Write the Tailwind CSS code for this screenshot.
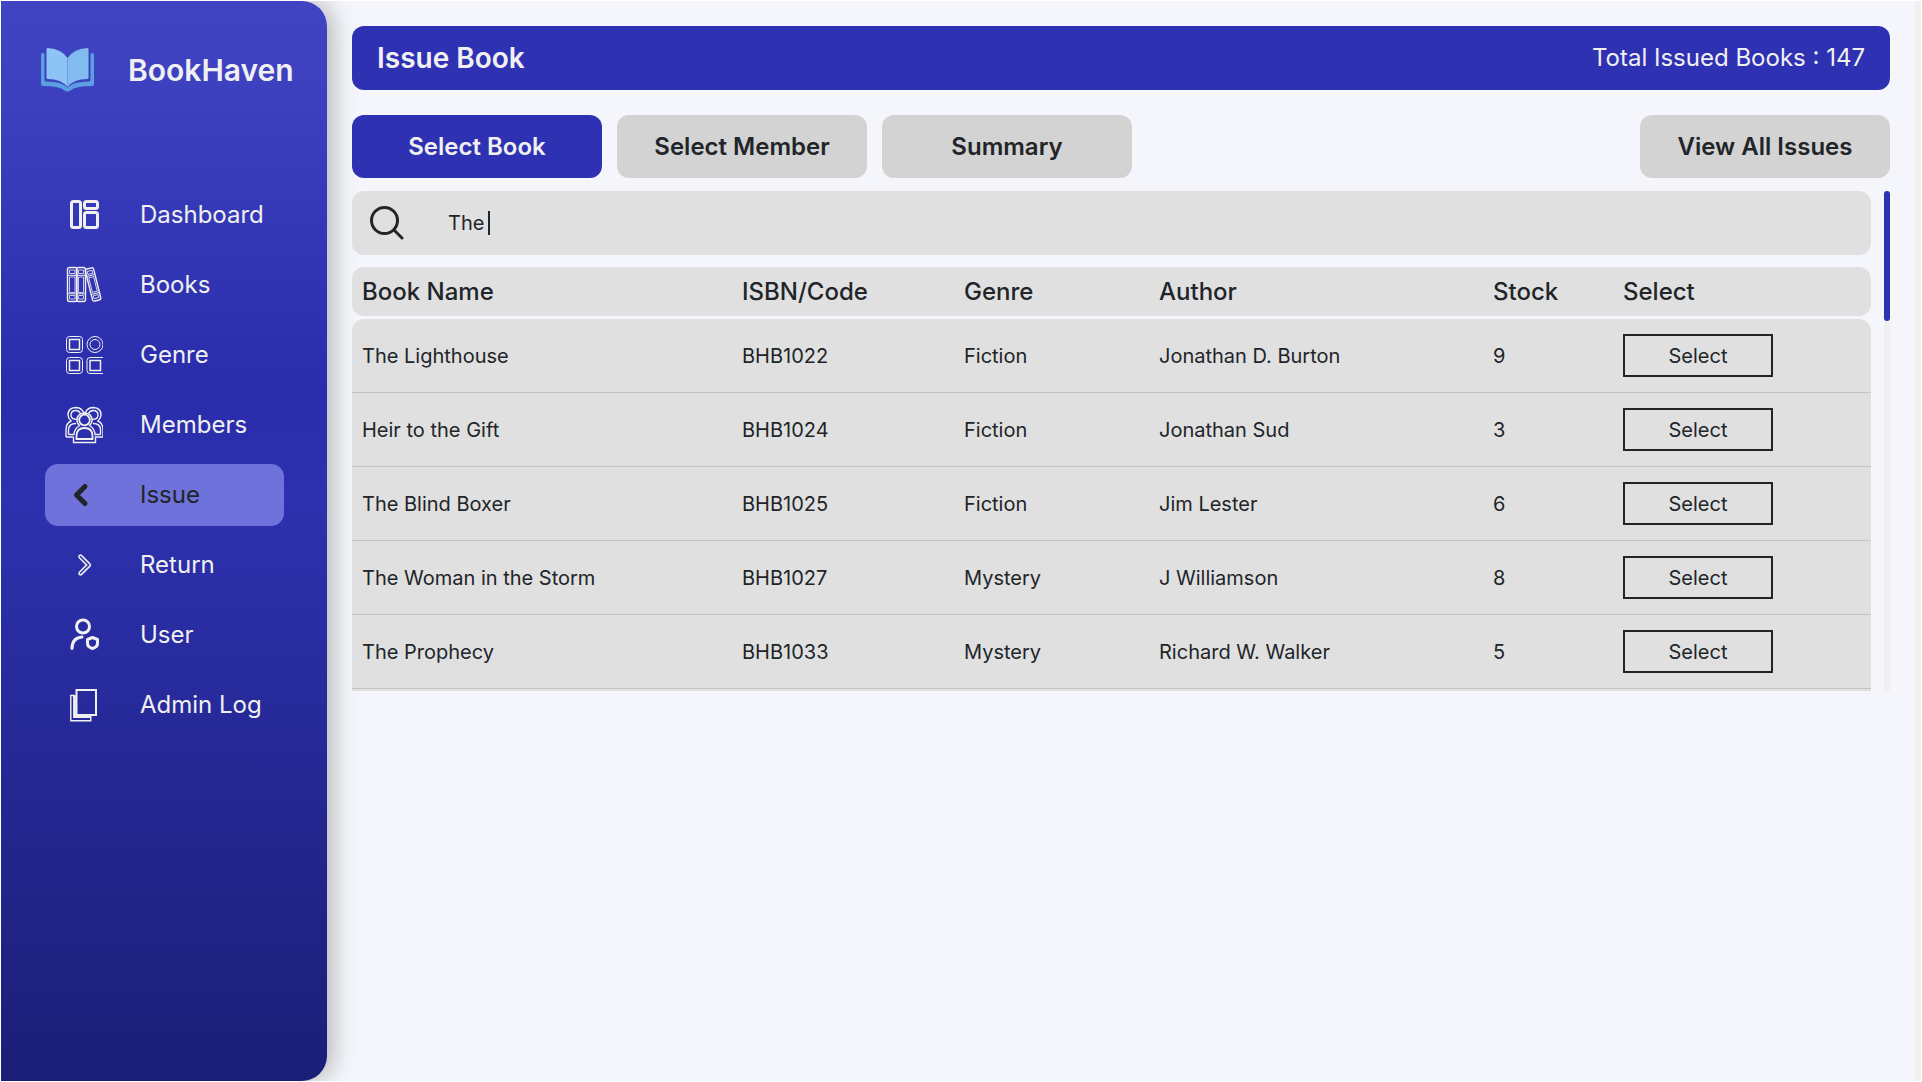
<!DOCTYPE html>
<html lang="en">
<head>
<meta charset="utf-8">
<title>BookHaven - Issue Book</title>
<script src="https://cdn.jsdelivr.net/npm/@tailwindcss/browser@4"></script>
</head>
<body class="bg-white p-px font-['Inter',sans-serif] text-[#212529]">
<div class="flex h-[calc(100vh-2px)] overflow-hidden border-r-6 border-[#f0f0f0] bg-[#f5f6fb]">
  <aside class="w-[326px] shrink-0 rounded-r-[25px] bg-[linear-gradient(#4044c1_0%,#3e41bf_8%,#2a2dab_36%,#2d31ae_46%,#1b1e76_100%)] text-[#f0f0f0] shadow-[5px_0_25px_rgba(0,0,0,0.28)]">
    <a href="#" class="mt-[46px] ml-10 flex h-[46px] items-center gap-[34px] text-[30px] leading-[44px] font-semibold">
      <svg class="h-[46px] w-[53px]" viewBox="0 0 53 46" aria-hidden="true">
        <path fill="#5b9fe0" d="M1.500 6H2q1.500 0 1.500 1.500V33q0 1.500 2 1.500 15.500 0 21 6 5.500-6 21-6 2 0 2-1.500V7.500Q49.500 6 51 6h.5Q53 6 53 7.500V37q0 2-2 2-17 0-21.500 4.500-3 2-6 0Q19 39 2 39q-2 0-2-2V7.500Q0 6 1.500 6z"/>
        <path fill="#8dc3f5" d="M7 1q13.500 1 19.500 10v29Q20 32 7 32q-1.500 0-1.500-1V2Q5.500 1 7 1z"/>
        <path fill="#82bbf0" d="M46 1q-13.500 1-19.500 10v29Q33 32 46 32q1.500 0 1.500-1V2q0-1-1.500-1z"/>
      </svg>
      BookHaven
    </a>
    <nav class="mt-[91px] mr-[43px] ml-11 flex flex-col gap-2 text-2xl">
      <a href="#" class="flex h-[62px] items-center gap-[37px] px-5">
        <svg class="size-[38px]" viewBox="0 0 38 38" fill="none" stroke="currentColor" stroke-width="3" aria-hidden="true">
          <rect x="6.500" y="5.500" width="9" height="26" rx="2"/><rect x="19.500" y="5.500" width="13" height="7" rx="2"/><rect x="19.500" y="16.500" width="13" height="15" rx="2"/>
        </svg>
        Dashboard
      </a>
      <a href="#" class="flex h-[62px] items-center gap-[37px] px-5">
        <svg class="size-[38px]" viewBox="0 0 38 38" fill="none" stroke="currentColor" aria-hidden="true">
          <rect x="2.500" y="1.500" width="9.500" height="34" rx="2" stroke-width="1.400"/><rect x="11.500" y="1.500" width="9" height="34" rx="2" stroke-width="1.400"/>
          <path stroke-width=".8" d="M4.500 4h5.500v3.500H4.500zM13.500 4h5v3.500h-5zM4.500 11h5.500v15.500H4.500zM13.500 11h5v15.500h-5zM4.500 29.500h5.500V33H4.500zM13.500 29.500h5V33h-5z"/>
          <path d="M2.500 9.300h18M2.500 27.800h18"/>
          <g transform="rotate(-14 28 18.500)"><rect x="23.800" y="2" width="8.500" height="33" rx="2" stroke-width="1.400"/><path stroke-width=".8" d="M25.500 4.500h5v3h-5zM25.500 11h5v15h-5zM25.500 29.500h5v3h-5z"/><path d="M24 9.300h8M24 27.700h8"/></g>
        </svg>
        Books
      </a>
      <a href="#" class="flex h-[62px] items-center gap-[37px] px-5">
        <svg class="size-[38px]" viewBox="0 0 38 38" fill="none" stroke="currentColor" aria-hidden="true">
          <rect x="1.500" y=".500" width="16" height="16" rx="3"/><rect x="4.500" y="3.500" width="10" height="10" stroke-width="1.500"/>
          <rect x="1.500" y="21.500" width="16" height="16" rx="3"/><rect x="4.500" y="24.500" width="10" height="10" stroke-width="1.500"/>
          <path d="M38 21.500H25q-3 0-3 3v10q0 3 3 3h13"/><path stroke-width="1.500" d="M25 24.500h10.500v10H25z"/>
          <circle cx="30" cy="8.500" r="8"/><circle cx="30" cy="8.500" r="5"/>
        </svg>
        Genre
      </a>
      <a href="#" class="flex h-[62px] items-center gap-[37px] px-5">
        <svg class="size-[38px]" viewBox="0 0 38 38" fill="none" stroke="currentColor" stroke-width="1.400" aria-hidden="true">
          <path d="M8.500 31v5.500h22V31h7.500M1 31h7.500M1 31v-7q0-7 5-9-3-3-3-6 0-7 7.500-7.500 6 0 8 5h2q2-5 8-5Q36 2 36 9q0 3-3 6 5 2 5 9v7"/>
          <path d="M12 13.500Q6 13.500 6 9q0-4.500 5-4.500 3 0 4.500 3M27 13.500q6 0 6-4.500T28 4.500q-3 0-4.500 3"/>
          <path d="M3.500 28.500V24q0-6.500 7.500-6.500M35.500 28.500V24q0-6.500-7.500-6.500M3.500 28.500h5.500q.5-6 5-8.500M35.500 28.500H30q-.5-6-5-8.500"/>
          <circle cx="19.500" cy="14" r="5.300" stroke-width="1.800"/><path d="M15 20q-3-2-3-6 0-6.500 7.500-7 7.500.5 7.500 7 0 4-3 6"/>
          <path stroke-width="1.800" d="M11.500 33V30q0-8 8-8t8 8v3z"/>
        </svg>
        Members
      </a>
      <a href="#" aria-current="page" class="flex h-[62px] items-center gap-[37px] rounded-[13px] bg-[#6f72da] px-5 text-[#212529]">
        <svg class="size-[38px]" viewBox="0 0 38 38" fill="none" stroke="currentColor" stroke-width="5" stroke-linecap="round" stroke-linejoin="round" aria-hidden="true"><path d="M20 10.500l-8.500 8.500 8.500 8.500"/></svg>
        Issue
      </a>
      <a href="#" class="flex h-[62px] items-center gap-[37px] px-5">
        <svg class="size-[38px]" viewBox="0 0 38 38" fill="none" stroke-linecap="round" stroke-linejoin="round" aria-hidden="true"><path stroke="currentColor" stroke-width="4.600" d="M15.500 10.700l8.300 8.300-8.300 8.300"/><path stroke="#2d31ae" stroke-width="1.600" d="M15.500 10.700l8.300 8.300-8.300 8.300"/></svg>
        Return
      </a>
      <a href="#" class="flex h-[62px] items-center gap-[37px] px-5">
        <svg class="size-[38px]" viewBox="0 0 38 38" fill="none" stroke="currentColor" stroke-width="3" stroke-linecap="round" aria-hidden="true">
          <circle cx="18" cy="10.500" r="6.500"/><path d="M7 32.500q0-10.500 10-11.500"/><path stroke-linejoin="round" d="M27.500 21.500l5 2v4q0 3.500-5 5-5-1.500-5-5v-4z"/>
        </svg>
        User
      </a>
      <a href="#" class="flex h-[62px] items-center gap-[37px] px-5">
        <svg class="size-[38px]" viewBox="0 0 38 38" fill="none" stroke="currentColor" aria-hidden="true">
          <rect x="11.500" y="4" width="19.500" height="25" stroke-width="2"/><path stroke-width="1.400" d="M10.500 9.500H5.800v25.200h20V30"/><path stroke-width="2.800" d="M9.500 10V30.500H26"/>
        </svg>
        Admin Log
      </a>
    </nav>
  </aside>

  <main class="min-w-0 flex-1 px-[25px] pt-[25px]">
    <header class="flex h-16 items-center justify-between rounded-xl bg-[#2f31b3] px-[25px] text-[#f0f0f0]">
      <h1 class="text-[28px] font-semibold">Issue Book</h1>
      <p class="text-2xl">Total Issued Books : 147</p>
    </header>

    <div class="mt-[25px] flex gap-[15px] text-2xl font-semibold">
      <button type="button" class="h-[63px] w-[250px] rounded-xl bg-[#2f31b3] text-[#f0f0f0]">Select Book</button>
      <button type="button" class="h-[63px] w-[250px] rounded-xl bg-[#d3d3d3]">Select Member</button>
      <button type="button" class="h-[63px] w-[250px] rounded-xl bg-[#d3d3d3]">Summary</button>
      <button type="button" class="ml-auto h-[63px] w-[250px] rounded-xl bg-[#d3d3d3]">View All Issues</button>
    </div>

    <div class="mt-[13px] flex h-[500px] gap-[13px]">
      <section class="min-w-0 flex-1 overflow-hidden">
        <div class="relative">
          <label class="flex h-16 items-center gap-11 rounded-xl bg-[#e0e0e0] pl-4">
            <svg class="size-9" viewBox="0 0 36 36" fill="none" stroke="currentColor" stroke-width="3" stroke-linecap="round" aria-label="Search"><circle cx="16.500" cy="15.500" r="13"/><path d="M26 25l8 8"/></svg>
            <input type="text" value="The " class="h-full flex-1 bg-transparent text-xl outline-none">
          </label>
          <span class="absolute top-5 left-[136px] h-6 w-0.5 bg-[#212529]"></span>
        </div>

        <table class="mt-3 block text-left">
          <thead class="block rounded-xl bg-[#e0e0e0] text-2xl">
            <tr class="grid h-[49px] grid-cols-[380fr_222fr_195fr_334fr_130fr_258fr] items-center">
              <th class="pl-2.5 font-medium">Book Name</th>
              <th class="pl-2.5 font-medium">ISBN/Code</th>
              <th class="pl-2.5 font-medium">Genre</th>
              <th class="pl-2.5 font-medium">Author</th>
              <th class="pl-2.5 font-medium">Stock</th>
              <th class="pl-2.5 font-medium">Select</th>
            </tr>
          </thead>
          <tbody id="rows" class="mt-[3px] block rounded-t-xl bg-[#e0e0e0] pb-[50px] text-xl leading-[26px]"></tbody>
        </table>
      </section>
      <div class="w-1.5 bg-[#f0f0f0]"><div class="h-[130px] rounded-full bg-[#2f31b3]"></div></div>
    </div>
  </main>
</div>

<script>
  const books = [
    ["The Lighthouse", "BHB1022", "Fiction", "Jonathan D. Burton", 9],
    ["Heir to the Gift", "BHB1024", "Fiction", "Jonathan Sud", 3],
    ["The Blind Boxer", "BHB1025", "Fiction", "Jim Lester", 6],
    ["The Woman in the Storm", "BHB1027", "Mystery", "J Williamson", 8],
    ["The Prophecy", "BHB1033", "Mystery", "Richard W. Walker", 5],
  ];
  document.getElementById("rows").innerHTML = books.map(book => `
    <tr class="grid h-[74px] grid-cols-[380fr_222fr_195fr_334fr_130fr_258fr] items-center border-b border-[#c4c4c4]">
      ${book.map(value => `<td class="pl-2.5">${value}</td>`).join("")}
      <td class="pl-2.5"><button type="button" class="block h-[43px] w-[150px] border-2 border-[#212529]">Select</button></td>
    </tr>`).join("");
</script>
</body>
</html>
